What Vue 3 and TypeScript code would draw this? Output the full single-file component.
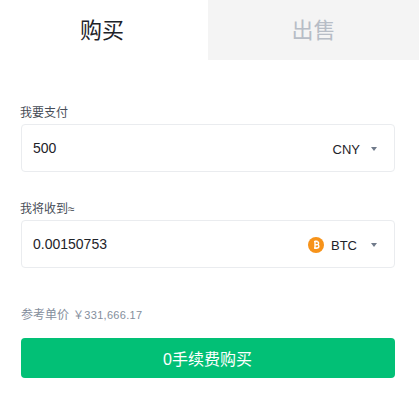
<script setup lang="ts">
interface Field {
  label: string
  value: string
  unit: string
  coin: boolean
}
const fields: Field[] = [
  { label: '我要支付', value: '500', unit: 'CNY', coin: false },
  { label: '我将收到≈', value: '0.00150753', unit: 'BTC', coin: true },
]
</script>

<template>
  <div class="widget">
    <div class="tabs">
      <div class="tab active">购买</div>
      <div class="tab">出售</div>
    </div>
    <div class="form">
      <div v-for="f in fields" :key="f.unit" class="field">
        <div class="label">{{ f.label }}</div>
        <div class="box">
          <span class="value">{{ f.value }}</span>
          <span class="unit" :class="{ fiat: !f.coin }">
            <svg v-if="f.coin" class="coin" width="16" height="16" viewBox="0 0 16 16">
              <circle cx="8" cy="8" r="8" fill="#f7931a" />
              <path d="M6 4.6h2.7c1.2 0 1.9.6 1.9 1.6 0 .7-.4 1.2-1 1.4.8.2 1.3.8 1.3 1.6 0 1.1-.8 1.8-2.1 1.8H6M7 4.6v6.4M7 7.7h2M7.3 3.6v1M8.8 3.6v1M7.3 11v1M8.8 11v1" fill="none" stroke="#fff" stroke-width="1.4" />
            </svg>
            <span class="code">{{ f.unit }}</span>
            <i class="caret"></i>
          </span>
        </div>
      </div>
      <div class="rate"><span>参考单价</span><span class="price">￥331,666.17</span></div>
      <button class="buy" type="button">0手续费购买</button>
    </div>
  </div>
</template>

<style>
html, body { margin: 0; background: #fff; }
</style>

<style scoped>
.widget {
  width: 419px;
  height: 407px;
  overflow: hidden;
  background: #fff;
  font-family: "Liberation Sans", "Noto Sans CJK SC", sans-serif;
}
.tabs {
  display: grid;
  grid-template-columns: 208px 211px;
  height: 60px;
}
.tab {
  box-sizing: border-box;
  display: flex;
  align-items: center;
  justify-content: center;
  padding-bottom: 4px;
  font-size: 22px;
  background: #f4f4f4;
  color: #b7bdc6;
}
.tab.active {
  padding-right: 4px;
  background: #fff;
  color: #1e2329;
}
.form {
  display: flex;
  flex-direction: column;
  padding: 44px 24px 0 21px;
}
.field {
  margin-bottom: 28px;
}
.label {
  height: 20px;
  margin-left: -1px;
  line-height: 18px;
  font-size: 12px;
  color: #474d57;
}
.box {
  box-sizing: border-box;
  display: flex;
  align-items: center;
  justify-content: space-between;
  height: 48px;
  padding: 0 17px 0 11px;
  border: 1px solid #eaecef;
  border-radius: 4px;
}
.value {
  font-size: 14px;
  color: #1e2329;
  margin-top: -1px;
}
.unit {
  display: flex;
  align-items: center;
  margin-top: 2px;
  font-size: 13px;
  color: #1e2329;
}
.coin {
  margin-right: 7px;
}
.caret {
  width: 0;
  height: 0;
  margin-left: 14px;
  border-left: 3.5px solid transparent;
  border-right: 3.5px solid transparent;
  border-top: 4px solid #707a8a;
}
.fiat .caret {
  margin-left: 11px;
}
.rate {
  display: flex;
  gap: 4px;
  margin-top: 10px;
  height: 18px;
  line-height: 18px;
  font-size: 12px;
  color: #848e9c;
}
.price {
  font-size: 11px;
  letter-spacing: 0.3px;
}
.buy {
  height: 40px;
  margin-top: 14px;
  padding: 0 1px 0 0;
  border: 0;
  border-radius: 4px;
  background: #02c076;
  color: #fff;
  font-family: inherit;
  font-size: 16px;
}
</style>
